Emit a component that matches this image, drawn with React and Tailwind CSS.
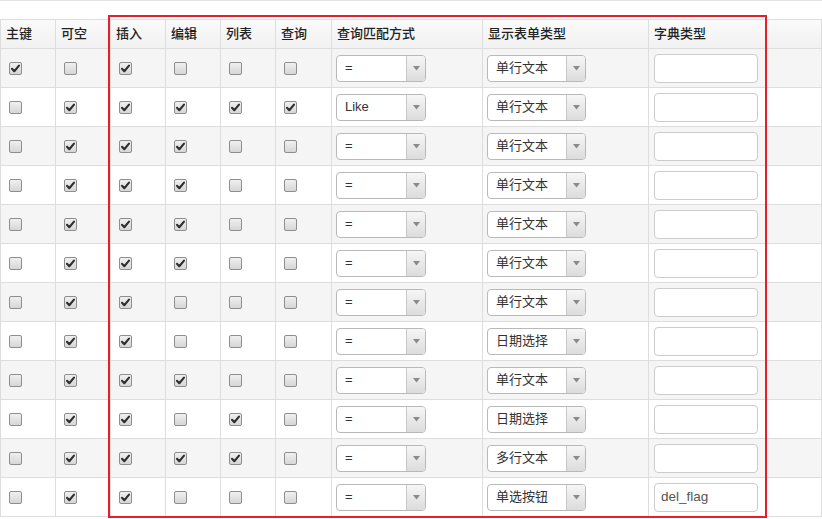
import React from "react";

const rows = [
  [1, 0, 1, 0, 0, 0, "=", "单行文本", ""],
  [0, 1, 1, 1, 1, 1, "Like", "单行文本", ""],
  [0, 1, 1, 1, 0, 0, "=", "单行文本", ""],
  [0, 1, 1, 1, 0, 0, "=", "单行文本", ""],
  [0, 1, 1, 1, 0, 0, "=", "单行文本", ""],
  [0, 1, 1, 1, 0, 0, "=", "单行文本", ""],
  [0, 1, 1, 0, 0, 0, "=", "单行文本", ""],
  [0, 1, 1, 0, 0, 0, "=", "日期选择", ""],
  [0, 1, 1, 1, 0, 0, "=", "单行文本", ""],
  [0, 1, 1, 0, 1, 0, "=", "日期选择", ""],
  [0, 1, 1, 1, 1, 0, "=", "多行文本", ""],
  [0, 1, 1, 0, 0, 0, "=", "单选按钮", "del_flag"],
];

const headers = ["主键", "可空", "插入", "编辑", "列表", "查询", "查询匹配方式", "显示表单类型", "字典类型"];

const grid = "grid grid-cols-[55px_55px_55px_55px_55px_56px_151px_166px_174px]";

function Checkbox({ checked }) {
  return (
    <div className="w-[13px] h-[13px] rounded-[2px] border border-[#8e8e8e] bg-gradient-to-b from-[#f0f0f0] to-[#d6d6d6] flex items-center justify-center">
      {checked ? (
        <svg width="11" height="11" viewBox="0 0 11 11">
          <path d="M2 5.8 L4.3 8.2 L9 2.6" fill="none" stroke="#2e2e2e" strokeWidth="2.1" strokeLinecap="round" strokeLinejoin="round" />
        </svg>
      ) : null}
    </div>
  );
}

function Select({ value, width }) {
  return (
    <div className={`flex h-[27px] ${width} rounded-[4px] border border-[#b9b9b9] bg-white overflow-hidden`}>
      <div className="flex-1 flex items-center pl-[8px] text-[13px] text-[#333]">{value}</div>
      <div className="w-[19px] border-l border-[#c8c8c8] bg-gradient-to-b from-[#f6f6f6] to-[#dcdcdc] flex items-center justify-center">
        <svg width="7" height="5" viewBox="0 0 7 5">
          <path d="M0 0 L7 0 L3.5 4.5 Z" fill="#8a8a8a" />
        </svg>
      </div>
    </div>
  );
}

export default function App() {
  return (
    <div
      className="relative w-[822px] h-[519px] bg-white overflow-hidden text-[#333]"
      style={{ fontFamily: '"Liberation Sans", "Noto Sans CJK SC", sans-serif' }}
    >
      <div className="h-[19px] border-t border-[#e3e3e3]" />
      <div className={`${grid} h-[30px] border-t border-b border-[#dddddd] bg-gradient-to-b from-[#fafafa] to-[#f1f1f1]`}>
        {headers.map((h, i) => (
          <div
            key={i}
            className={`flex items-center px-[5px] text-[13px] font-medium text-[#222] border-l border-[#dddddd] ${i === 8 ? "border-r" : ""}`}
          >
            {h}
          </div>
        ))}
      </div>
      {rows.map((r, ri) => (
        <div
          key={ri}
          className={`${grid} h-[39px] border-b border-[#dddddd] ${ri % 2 === 0 ? "bg-[#f5f5f5]" : "bg-white"}`}
        >
          {r.slice(0, 6).map((c, ci) => (
            <div key={ci} className="flex items-center pl-[8px] border-l border-[#dddddd]">
              <Checkbox checked={c === 1} />
            </div>
          ))}
          <div className="flex items-center pl-[4px] border-l border-[#dddddd]">
            <Select value={r[6]} width="w-[90px]" />
          </div>
          <div className="flex items-center pl-[4px] border-l border-[#dddddd]">
            <Select value={r[7]} width="w-[99px]" />
          </div>
          <div className="flex items-center pl-[5px] border-l border-r border-[#dddddd]">
            <div className="w-[104px] h-[29px] rounded-[4px] border border-[#cccccc] bg-white flex items-center pl-[6px] text-[13.5px] text-[#555]">
              {r[8]}
            </div>
          </div>
        </div>
      ))}
      <div className="absolute left-[108px] top-[15px] w-[659px] h-[503px] border-2 border-[#e5202b] pointer-events-none" />
    </div>
  );
}
